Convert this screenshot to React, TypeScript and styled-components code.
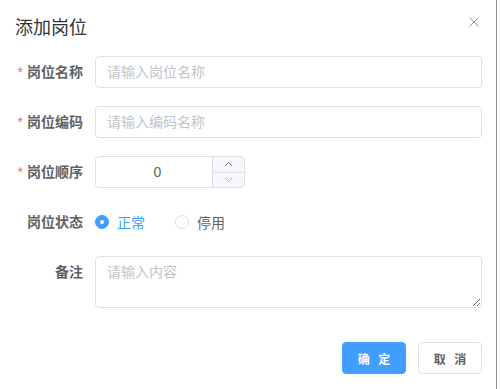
import * as React from "react";
import { useState } from "react";
import styled, { createGlobalStyle } from "styled-components";

const COLORS = {
  primary: "#409eff",
  title: "#303133",
  text: "#606266",
  placeholder: "#c0c4cc",
  border: "#dcdfe6",
  danger: "#f56c6c",
  control: "#f5f7fa",
  close: "#909399",
};

const GlobalStyle = createGlobalStyle`
  html, body {
    margin: 0;
    padding: 0;
    background: #ffffff;
  }
  body {
    font-family: "Liberation Sans", "Noto Sans CJK SC", sans-serif;
    -webkit-font-smoothing: antialiased;
  }
  * {
    box-sizing: border-box;
  }
`;

const Dialog = styled.div`
  width: 497px;
  height: 389px;
  background: #ffffff;
  border-right: 1px solid #8e8e8e;
  display: flex;
  flex-direction: column;
`;

const Header = styled.div`
  display: flex;
  justify-content: space-between;
  align-items: flex-start;
  padding: 16px 17px 0 15px;
`;

const Title = styled.span`
  font-size: 18px;
  line-height: 24px;
  color: ${COLORS.title};
`;

const CloseButton = styled.button`
  border: none;
  background: transparent;
  padding: 0;
  margin-top: 1px;
  width: 10px;
  height: 10px;
  cursor: pointer;
  display: flex;
`;

const Body = styled.div`
  padding: 16px 14px 0 15px;
`;

const FormItem = styled.div`
  display: flex;
  align-items: flex-start;
  margin-bottom: 18px;
`;

const Label = styled.label<{ required?: boolean }>`
  width: 80px;
  flex-shrink: 0;
  text-align: right;
  padding-right: 12px;
  font-size: 14px;
  line-height: 32px;
  font-weight: 700;
  color: ${COLORS.text};
  ${(props) =>
    props.required &&
    `
    &::before {
      content: "*";
      color: ${COLORS.danger};
      margin-right: 4px;
      font-weight: 400;
    }
  `}
`;

const Content = styled.div`
  flex: 1;
  display: flex;
  align-items: center;
  min-height: 32px;
`;

const TextInput = styled.input`
  width: 100%;
  height: 32px;
  border: 1px solid ${COLORS.border};
  border-radius: 4px;
  padding: 0 11px;
  font-family: inherit;
  font-size: 14px;
  color: ${COLORS.text};
  outline: none;
  &::placeholder {
    color: ${COLORS.placeholder};
  }
`;

const TextArea = styled.textarea`
  width: 100%;
  height: 52px;
  border: 1px solid ${COLORS.border};
  border-radius: 4px;
  padding: 5px 11px;
  font-family: inherit;
  font-size: 14px;
  line-height: 1.5;
  color: ${COLORS.text};
  resize: vertical;
  outline: none;
  display: block;
  &::placeholder {
    color: ${COLORS.placeholder};
  }
`;

const NumberBox = styled.div`
  width: 150px;
  height: 32px;
  border: 1px solid ${COLORS.border};
  border-radius: 4px;
  display: flex;
  overflow: hidden;
`;

const NumberField = styled.input`
  flex: 1;
  min-width: 0;
  border: none;
  outline: none;
  padding: 0 8px 0 15px;
  text-align: center;
  font-family: inherit;
  font-size: 14px;
  color: ${COLORS.text};
`;

const Controls = styled.div`
  width: 32px;
  display: flex;
  flex-direction: column;
  border-left: 1px solid ${COLORS.border};
  background: ${COLORS.control};
`;

const Step = styled.span<{ bottom?: boolean }>`
  flex: 1;
  display: flex;
  align-items: center;
  justify-content: center;
  color: ${COLORS.text};
  ${(props) => props.bottom && `border-top: 1px solid ${COLORS.border};`}
`;

const RadioGroup = styled.div`
  display: flex;
  align-items: center;
  height: 32px;
`;

const Radio = styled.label<{ checked: boolean }>`
  display: flex;
  align-items: center;
  margin-right: 30px;
  cursor: pointer;
  font-size: 14px;
  color: ${(props) => (props.checked ? COLORS.primary : COLORS.text)};
`;

const RadioDot = styled.span<{ checked: boolean }>`
  width: 14px;
  height: 14px;
  border-radius: 50%;
  border: 1px solid ${(props) => (props.checked ? COLORS.primary : COLORS.border)};
  background: ${(props) => (props.checked ? COLORS.primary : "#ffffff")};
  display: flex;
  align-items: center;
  justify-content: center;
  margin-right: 8px;
  &::after {
    content: "";
    width: 4px;
    height: 4px;
    border-radius: 50%;
    background: #ffffff;
  }
`;

const Footer = styled.div`
  display: flex;
  justify-content: flex-end;
  gap: 12px;
  padding: 16px 14px 15px;
  margin-top: auto;
`;

const Button = styled.button<{ primary?: boolean }>`
  width: 64px;
  height: 32px;
  border-radius: 4px;
  border: 1px solid ${(props) => (props.primary ? COLORS.primary : COLORS.border)};
  background: ${(props) => (props.primary ? COLORS.primary : "#ffffff")};
  color: ${(props) => (props.primary ? "#ffffff" : COLORS.text)};
  font-family: "Noto Sans CJK SC", sans-serif;
  font-size: 12px;
  font-weight: 700;
  letter-spacing: 3px;
  padding: 0 0 0 3px;
  cursor: pointer;
`;

const Chevron = ({ up }: { up?: boolean }) => (
  <svg width="9" height="6" viewBox="0 0 9 6" fill="none">
    <path
      d={up ? "M1 5L4.5 1.5L8 5" : "M1 1L4.5 4.5L8 1"}
      stroke={up ? "#7a7d84" : "#b4b7bd"}
      strokeWidth="1"
    />
  </svg>
);

const App = () => {
  const [status, setStatus] = useState("0");
  const [sort, setSort] = useState("0");

  return (
    <>
      <GlobalStyle />
      <Dialog>
        <Header>
          <Title>添加岗位</Title>
          <CloseButton aria-label="close">
            <svg width="10" height="10" viewBox="0 0 10 10">
              <path d="M0.5 0.5L9.5 9.5M9.5 0.5L0.5 9.5" stroke={COLORS.close} strokeWidth="1" />
            </svg>
          </CloseButton>
        </Header>
        <Body>
          <FormItem>
            <Label required>岗位名称</Label>
            <Content>
              <TextInput placeholder="请输入岗位名称" />
            </Content>
          </FormItem>
          <FormItem>
            <Label required>岗位编码</Label>
            <Content>
              <TextInput placeholder="请输入编码名称" />
            </Content>
          </FormItem>
          <FormItem>
            <Label required>岗位顺序</Label>
            <Content>
              <NumberBox>
                <NumberField value={sort} onChange={(e) => setSort(e.target.value)} />
                <Controls>
                  <Step>
                    <Chevron up />
                  </Step>
                  <Step bottom>
                    <Chevron />
                  </Step>
                </Controls>
              </NumberBox>
            </Content>
          </FormItem>
          <FormItem>
            <Label>岗位状态</Label>
            <Content>
              <RadioGroup>
                {[
                  { value: "0", label: "正常" },
                  { value: "1", label: "停用" },
                ].map((item) => (
                  <Radio
                    key={item.value}
                    checked={status === item.value}
                    onClick={() => setStatus(item.value)}
                  >
                    <RadioDot checked={status === item.value} />
                    {item.label}
                  </Radio>
                ))}
              </RadioGroup>
            </Content>
          </FormItem>
          <FormItem>
            <Label>备注</Label>
            <Content>
              <TextArea placeholder="请输入内容" />
            </Content>
          </FormItem>
        </Body>
        <Footer>
          <Button primary>确 定</Button>
          <Button>取 消</Button>
        </Footer>
      </Dialog>
    </>
  );
};

export default App;
